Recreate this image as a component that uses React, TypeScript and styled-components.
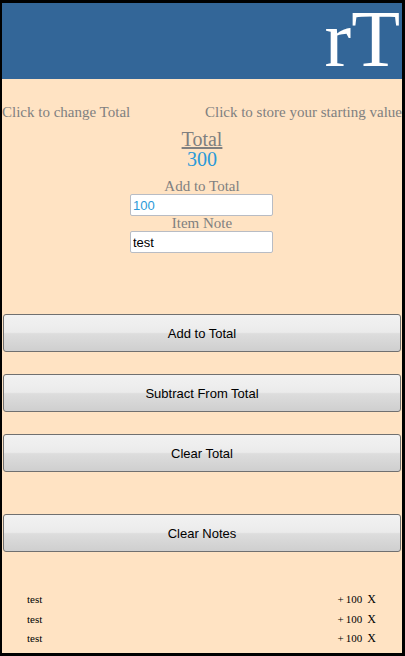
import * as React from 'react'
import styled, { createGlobalStyle } from 'styled-components'

const GlobalStyle = createGlobalStyle`
    html, body {
        margin: 0;
        padding: 0;
        background: #000;
    }
    * {
        box-sizing: border-box;
    }
`

const Frame = styled.div`
    width: 405px;
    height: 656px;
    border-style: solid;
    border-color: #000;
    border-width: 3px 3px 3px 2px;
    background: #ffe3c3;
    font-family: "Liberation Serif", "Times New Roman", serif;
    overflow: hidden;
`

const Header = styled.header`
    height: 76px;
    background: #336698;
    color: #fff;
    text-align: right;
    font-size: 80px;
    line-height: 72px;
    padding-right: 2px;
`

const LinkRow = styled.div`
    display: flex;
    justify-content: space-between;
    margin-top: 24px;
    font-size: 15px;
    line-height: 18px;
    color: #808080;
    white-space: nowrap;
`

const Link = styled.span`
    cursor: pointer;
`

const Center = styled.div`
    display: flex;
    flex-direction: column;
    align-items: center;
`

const TotalTitle = styled.div`
    margin-top: 8px;
    font-size: 20px;
    line-height: 20px;
    color: #808080;
    text-decoration: underline;
`

const TotalValue = styled.div`
    font-size: 20px;
    line-height: 20px;
    color: #2b9ad8;
`

const Label = styled.label<{ $first?: boolean }>`
    margin-top: ${props => (props.$first ? '10px' : '0')};
    font-size: 15px;
    line-height: 15px;
    color: #808080;
`

const Input = styled.input<{ $accent?: boolean }>`
    width: 143px;
    height: 22px;
    padding: 0 2px;
    margin: 0 1px 0 0;
    border: 1px solid #b8bcc4;
    border-radius: 2px;
    background: #fff;
    font-family: "Liberation Sans", Arial, sans-serif;
    font-size: 13px;
    color: ${props => (props.$accent ? '#2b9ad8' : '#000')};
    outline: none;
`

const Buttons = styled.div`
    display: flex;
    flex-direction: column;
    padding: 0 1px;
    margin-top: 61px;
`

const Button = styled.button<{ $gap: number }>`
    height: 38px;
    margin: ${props => props.$gap}px 0 0;
    border: 1px solid #707070;
    border-radius: 3px;
    background: linear-gradient(to bottom, #f2f2f2 0%, #ebebeb 48%, #dddddd 52%, #cfcfcf 100%);
    font-family: "Liberation Sans", Arial, sans-serif;
    font-size: 13px;
    color: #000;
    cursor: pointer;
`

const Notes = styled.ul`
    list-style: none;
    margin: 38px 0 0;
    padding: 0 26px 0 25px;
    font-size: 11px;
    color: #000;
`

const Note = styled.li`
    display: flex;
    justify-content: space-between;
    height: 19.5px;
    line-height: 19.5px;
`

const Amount = styled.span`
    display: flex;
    gap: 5px;
`

const Remove = styled.span`
    font-size: 12px;
    cursor: pointer;
`

const notes = ['test', 'test', 'test']

export default function App() {
    return (
        <>
            <GlobalStyle />
            <Frame>
                <Header>rT</Header>
                <LinkRow>
                    <Link>Click to change Total</Link>
                    <Link>Click to store your starting value</Link>
                </LinkRow>
                <Center>
                    <TotalTitle>Total</TotalTitle>
                    <TotalValue>300</TotalValue>
                    <Label $first>Add to Total</Label>
                    <Input $accent defaultValue="100" />
                    <Label>Item Note</Label>
                    <Input defaultValue="test" />
                </Center>
                <Buttons>
                    <Button $gap={0}>Add to Total</Button>
                    <Button $gap={22}>Subtract From Total</Button>
                    <Button $gap={22}>Clear Total</Button>
                    <Button $gap={42}>Clear Notes</Button>
                </Buttons>
                <Notes>
                    {notes.map((n, i) => (
                        <Note key={i}>
                            <span>{n}</span>
                            <Amount>
                                <span>+&#8201;100</span>
                                <Remove>X</Remove>
                            </Amount>
                        </Note>
                    ))}
                </Notes>
            </Frame>
        </>
    )
}
